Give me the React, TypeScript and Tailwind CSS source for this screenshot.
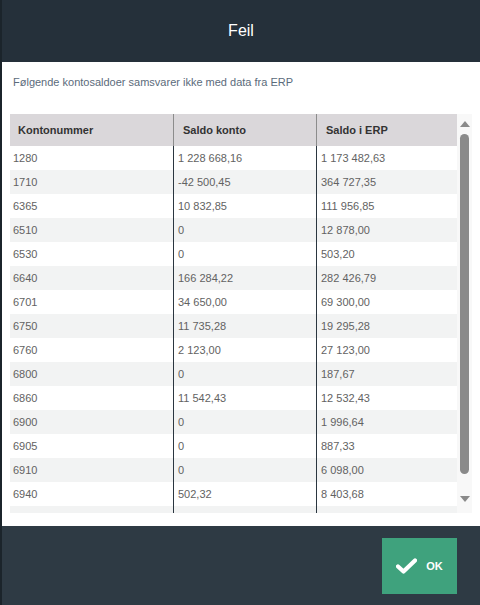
import { Fragment } from 'react';

const rows: [string, string, string][] = [
  ['1280', '1 228 668,16', '1 173 482,63'],
  ['1710', '-42 500,45', '364 727,35'],
  ['6365', '10 832,85', '111 956,85'],
  ['6510', '0', '12 878,00'],
  ['6530', '0', '503,20'],
  ['6640', '166 284,22', '282 426,79'],
  ['6701', '34 650,00', '69 300,00'],
  ['6750', '11 735,28', '19 295,28'],
  ['6760', '2 123,00', '27 123,00'],
  ['6800', '0', '187,67'],
  ['6860', '11 542,43', '12 532,43'],
  ['6900', '0', '1 996,64'],
  ['6905', '0', '887,33'],
  ['6910', '0', '6 098,00'],
  ['6940', '502,32', '8 403,68'],
  ['', '', ''],
];

export default function App() {
  return (
    <div className="flex h-[605px] w-[480px] bg-[#1b242b] font-['Liberation_Sans',Arial,sans-serif]">
      <div className="ml-[2px] flex flex-1 flex-col">
        <header className="flex h-[62px] items-center justify-center bg-[#25303a] text-[16px] text-white">Feil</header>

        <main className="flex h-[464px] flex-col bg-white">
          <p className="mt-[13px] pl-[11px] text-[11px] leading-[14px] text-[#5b6b7b]">Følgende kontosaldoer samsvarer ikke med data fra ERP</p>

          <div className="ml-[8px] mt-[25px] flex h-[399px] w-[462px]">
            <div className="h-full w-[447px] overflow-hidden">
              <div className="grid grid-cols-[163px_143px_141px] text-[11px]">
                <div className="flex h-[32px] items-center bg-[#dad7da] pl-[8px] font-bold text-[#333]">Kontonummer</div>
                <div className="flex h-[32px] items-center border-l border-[#8c8c8c] bg-[#dad7da] pl-[9px] font-bold text-[#333]">Saldo konto</div>
                <div className="flex h-[32px] items-center border-l border-[#8c8c8c] bg-[#dad7da] pl-[9px] font-bold text-[#333]">Saldo i ERP</div>
                {rows.map(([konto, saldo, erp], i) => {
                  const bg = i % 2 === 1 ? 'bg-[#f2f3f3]' : 'bg-white';
                  return (
                    <Fragment key={i}>
                      <div className={`flex h-[24px] items-center pl-[3px] text-[#626262] ${bg}`}>{konto}</div>
                      <div className={`flex h-[24px] items-center border-l border-[#2b3640] pl-[4px] text-[#626262] ${bg}`}>{saldo}</div>
                      <div className={`flex h-[24px] items-center border-l border-[#2b3640] pl-[4px] text-[#626262] ${bg}`}>{erp}</div>
                    </Fragment>
                  );
                })}
              </div>
            </div>

            <div className="flex h-full w-[15px] flex-col items-center bg-[#f8f8f8]">
              <svg width="10" height="6" viewBox="0 0 10 6" className="mt-[7px]">
                <path d="M5 0 L10 6 L0 6 Z" fill="#8a8a8a" />
              </svg>
              <div className="mt-[7px] h-[340px] w-[9px] rounded-full bg-[#8a8a8a]" />
              <svg width="10" height="6" viewBox="0 0 10 6" className="mt-[22px]">
                <path d="M0 0 L10 0 L5 6 Z" fill="#8a8a8a" />
              </svg>
            </div>
          </div>
        </main>

        <footer className="flex flex-1 items-start justify-end bg-[#2e3a44] pr-[23px] pt-[12px]">
          <button className="flex h-[56px] w-[75px] items-center justify-center gap-[9px] bg-[#3fa27d] text-white">
            <svg width="21" height="16" viewBox="0 0 21 16">
              <path d="M2 8.5 L7.5 13.5 L19 2.5" fill="none" stroke="#fff" strokeWidth="4.2" strokeLinecap="round" strokeLinejoin="round" />
            </svg>
            <span className="text-[11px] font-bold">OK</span>
          </button>
        </footer>
      </div>
    </div>
  );
}
